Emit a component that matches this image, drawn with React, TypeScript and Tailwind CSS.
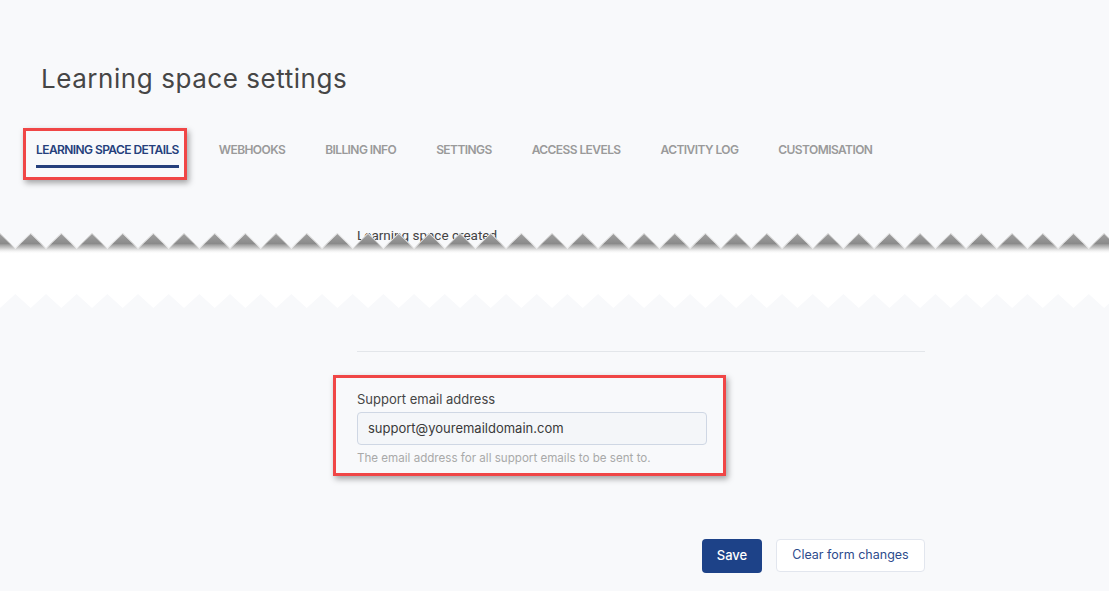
import React from 'react';

const tabs = [
  'Learning space details',
  'Webhooks',
  'Billing info',
  'Settings',
  'Access levels',
  'Activity log',
  'Customisation',
];

// Torn-paper strip that covers part of the page (screenshot annotation)
function TornStrip() {
  const w = 1109;
  const step = 30.67;
  const top: string[] = [];
  const bottom: string[] = [];
  for (let x = -15.33; x <= w + step; x += step / 2) {
    const i = Math.round((x + 15.33) / (step / 2));
    const up = i % 2 === 1;
    top.push(`${x.toFixed(2)},${up ? 3 : 18}`);
    bottom.push(`${x.toFixed(2)},${up ? 78 : 64}`);
  }
  const edge = top.join(' ');
  const poly = `${edge} ${[...bottom].reverse().join(' ')}`;
  return (
    <svg width={w} height={84} viewBox={`0 0 ${w} 84`} className="absolute left-0 top-[62px]">
      <defs>
        <clipPath id="paper">
          <polygon points={poly} />
        </clipPath>
        <linearGradient id="shade" x1="0" y1="0" x2="0" y2="1">
          <stop offset="0" stopColor="#a2a2a2" stopOpacity="1" />
          <stop offset="0.5" stopColor="#8a8a8a" stopOpacity="1" />
          <stop offset="0.72" stopColor="#a8a8a8" stopOpacity="0.6" />
          <stop offset="1" stopColor="#ffffff" stopOpacity="0" />
        </linearGradient>
      </defs>
      <polygon points={poly} fill="#ffffff" />
      <g clipPath="url(#paper)">
        <rect x={0} y={3} width={w} height={21} fill="url(#shade)" />
        <polyline points={edge} fill="none" stroke="#ffffff" strokeWidth={1.4} opacity={0.8} />
      </g>
    </svg>
  );
}

export default function App() {
  return (
    <div className="w-full h-[591px] overflow-hidden bg-[#f8f9fb] font-['Inter',sans-serif] pt-[63px]">
      {/* Page title */}
      <h1 className="pl-[41px] text-[26px] leading-[32px] font-normal text-[#464646] tracking-[0.55px]">
        Learning space settings
      </h1>

      {/* Tabs */}
      <div className="mt-[47px] pl-[36px] flex gap-[40px]">
        {tabs.map((t, i) => (
          <div key={t} className="relative flex flex-col">
            <span
              className={
                i === 0
                  ? 'text-[12px] leading-[16px] font-semibold uppercase tracking-[-0.58px] text-[#253f7c]'
                  : 'text-[12px] leading-[16px] font-semibold uppercase tracking-[-0.58px] text-[#9a9a9a]'
              }
            >
              {t}
            </span>
            {i === 0 ? (
              <>
                <div className="mt-[7px] h-[3px] bg-[#253f7c]" />
                <div className="absolute left-[-13px] right-[-8px] top-[-14px] bottom-[-12px] border-[3px] border-[#f04646] shadow-[2px_3px_6px_rgba(0,0,0,0.35)]" />
              </>
            ) : null}
          </div>
        ))}
      </div>

      {/* Torn section */}
      <div className="relative h-[183px]">
        <p className="pl-[357px] pt-[58px] text-[13.5px] leading-[18px] text-[#444] font-['Roboto',sans-serif]">
          Learning space created
        </p>
        <TornStrip />
      </div>

      {/* Form column */}
      <div className="ml-[357px] w-[568px] border-t border-[#e3e6ea]">
        <div className="relative mt-[39px] w-[350px]">
          <label className="block text-[13px] leading-[16px] text-[#454545]">Support email address</label>
          <div className="mt-[5px] h-[33px] rounded-[4px] border border-[#cfd7e4] bg-[#f4f6f9] pl-[10px] flex items-center text-[13px] text-[#3a3a3a]">
            support@youremaildomain.com
          </div>
          <p className="mt-[6px] text-[11.6px] leading-[14px] text-[#a9a9a9]">
            The email address for all support emails to be sent to.
          </p>
          <div className="absolute left-[-24px] right-[-19px] top-[-16px] bottom-[-11px] border-[3px] border-[#f04646] shadow-[2px_3px_6px_rgba(0,0,0,0.35)]" />
        </div>

        <div className="mt-[74px] flex justify-end gap-[14px]">
          <button className="w-[60px] h-[34px] rounded-[4px] bg-[#1d4288] text-white text-[13px] font-medium">
            Save
          </button>
          <button className="w-[149px] h-[33px] rounded-[4px] border border-[#e2e6ee] bg-white text-[#2d4b8c] text-[12.5px]">
            Clear form changes
          </button>
        </div>
      </div>
    </div>
  );
}
